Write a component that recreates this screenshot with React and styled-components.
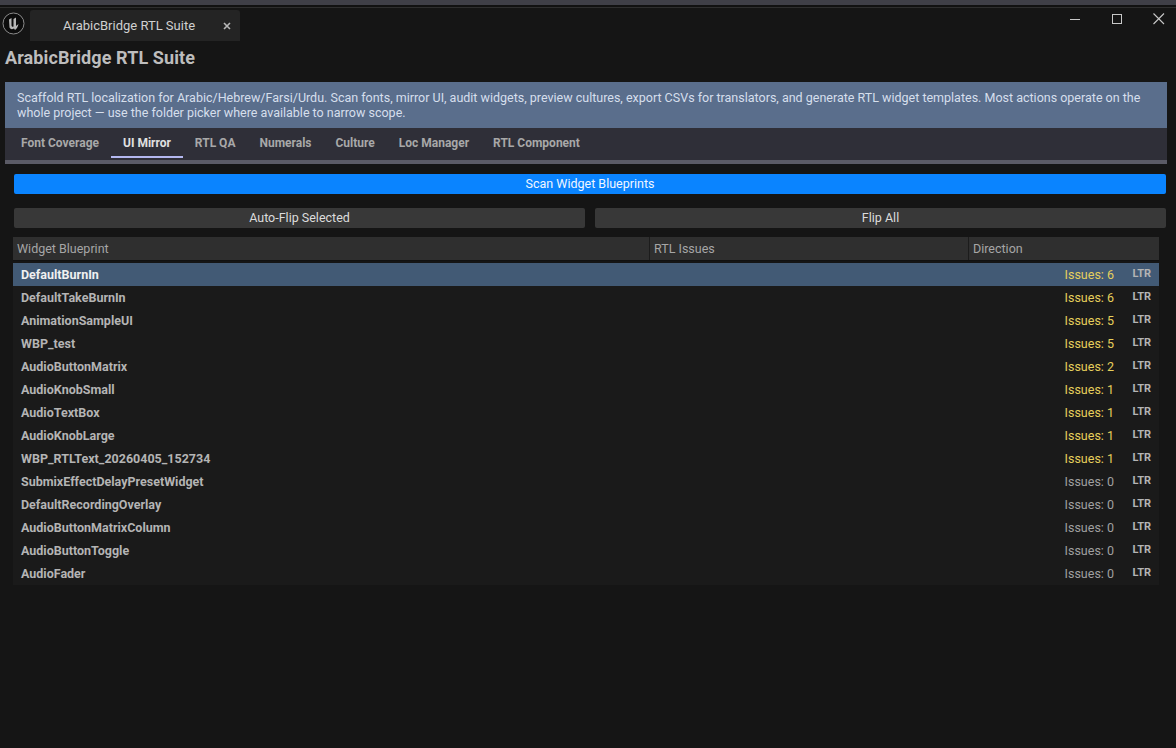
import React from "react";
import styled, { createGlobalStyle } from "styled-components";

const GlobalStyle = createGlobalStyle`
  html, body {
    margin: 0;
    padding: 0;
    background: #151515;
  }
  * {
    box-sizing: border-box;
  }
`;

const Window = styled.div`
  width: 1176px;
  height: 748px;
  overflow: hidden;
  background: #151515;
  font-family: Roboto, "Liberation Sans", sans-serif;
  color: #c0c0c0;
`;

const TopStrip = styled.div`
  height: 8px;
  background: #111111;
  border-top: 5px solid #3f3f47;
  border-bottom: 1px solid #2e2e2e;
`;

const TitleBar = styled.div`
  display: flex;
  align-items: flex-start;
  height: 33px;
  padding: 2px 0 0 2px;
`;

const Logo = styled.svg`
  width: 23px;
  height: 23px;
  margin-top: 2px;
  flex: none;
`;

const DocTab = styled.div`
  display: flex;
  align-items: center;
  justify-content: space-between;
  width: 210px;
  height: 31px;
  margin-left: 5px;
  padding: 0 9px 0 33px;
  background: #242424;
  border-radius: 3px 3px 0 0;
  font-size: 13px;
  color: #d0d0d0;
`;

const TabClose = styled.svg`
  width: 8px;
  height: 8px;
`;

const WindowButtons = styled.div`
  display: flex;
  margin-left: auto;
  padding-right: 10px;
`;

const WindowButton = styled.svg`
  width: 14px;
  height: 14px;
  margin-left: 28px;
  margin-top: 2px;
`;

const Heading = styled.h1`
  margin: 0;
  height: 41px;
  padding: 4px 0 0 5px;
  font-size: 18px;
  line-height: 26px;
  font-weight: 700;
  letter-spacing: 0.1px;
  color: #bdbdbd;
`;

const Panel = styled.div`
  margin: 0 9px 0 5px;
`;

const Banner = styled.div`
  height: 46px;
  padding: 8px 12px;
  background: #5a6e8c;
  color: #d6dfec;
  font-size: 12.5px;
  line-height: 15px;
`;

const TabBar = styled.div`
  display: flex;
  height: 36px;
  padding-left: 4px;
  background: #2f2f38;
  border-bottom: 4px solid #5b5b66;
`;

const Tab = styled.div`
  height: 30px;
  padding: 0 12px;
  font-size: 12px;
  font-weight: 700;
  line-height: 30px;
  color: ${(p) => (p.$active ? "#e0e0e0" : "#a8a8a8")};
  border-bottom: 2px solid ${(p) => (p.$active ? "#b4b8f0" : "transparent")};
`;

const Content = styled.div`
  padding: 10px 9px 0 8px;
  margin: 0 -9px 0 -5px;
  padding-left: 13px;
`;

const Button = styled.div`
  flex: 1;
  height: 20px;
  margin-left: 1px;
  border-radius: 2px;
  font-size: 12.5px;
  line-height: 20px;
  text-align: center;
  color: ${(p) => (p.$primary ? "#f0f6ff" : "#dcdcdc")};
  background: ${(p) => (p.$primary ? "#0a84ff" : "#383838")};
`;

const ButtonRow = styled.div`
  display: flex;
  gap: 9px;
  margin: ${(p) => p.$margin || 0};
  padding-right: 1px;
`;

const Table = styled.div`
  margin: 9px 0 0;
  width: 1146px;
`;

const HeaderRow = styled.div`
  display: grid;
  grid-template-columns: 637px 319px 1fr;
  height: 24px;
  background: #2f2f2f;
  border-bottom: 1px solid #111111;
  margin-bottom: 2px;
`;

const HeaderCell = styled.div`
  padding-left: 4px;
  font-size: 12.5px;
  line-height: 23px;
  color: #a6a6a6;
  border-right: ${(p) => (p.$last ? "none" : "1px solid #1c1c1c")};
`;

const Row = styled.div`
  display: flex;
  align-items: center;
  height: 23px;
  padding: 0 8px;
  background: ${(p) => (p.$selected ? "#425a75" : "#1a1a1a")};
`;

const Name = styled.div`
  flex: 1;
  font-size: 12.5px;
  font-weight: 700;
  color: ${(p) => (p.$selected ? "#f0f0f0" : "#b4b4b4")};
`;

const Issues = styled.div`
  font-size: 12.5px;
  color: ${(p) => (p.$warn ? "#e6cf5c" : "#a0a0a0")};
`;

const Dir = styled.div`
  width: 37px;
  margin-bottom: 2px;
  text-align: right;
  font-size: 11px;
  font-weight: 700;
  color: #b4b4b4;
`;

const tabs = [
  "Font Coverage",
  "UI Mirror",
  "RTL QA",
  "Numerals",
  "Culture",
  "Loc Manager",
  "RTL Component",
];

const rows = [
  ["DefaultBurnIn", 6],
  ["DefaultTakeBurnIn", 6],
  ["AnimationSampleUI", 5],
  ["WBP_test", 5],
  ["AudioButtonMatrix", 2],
  ["AudioKnobSmall", 1],
  ["AudioTextBox", 1],
  ["AudioKnobLarge", 1],
  ["WBP_RTLText_20260405_152734", 1],
  ["SubmixEffectDelayPresetWidget", 0],
  ["DefaultRecordingOverlay", 0],
  ["AudioButtonMatrixColumn", 0],
  ["AudioButtonToggle", 0],
  ["AudioFader", 0],
];

export default function App() {
  return (
    <Window>
      <GlobalStyle />
      <TopStrip />
      <TitleBar>
        <Logo viewBox="0 0 23 23" fill="none">
          <circle cx="11.5" cy="11.5" r="10.5" fill="#0c0c0c" stroke="#8a8a8a" strokeWidth="1" />
          <path
            d="M7 7.5 L9.5 6 L9.5 13.5 Q10 15.5 11.5 14.5 L11.5 7 L14 5.5 L14 14 L16.5 12 Q15.5 16.5 13 18 L12 16.5 Q9 18.5 7.5 15.5 Z"
            fill="#b8b8b8"
          />
        </Logo>
        <DocTab>
          ArabicBridge RTL Suite
          <TabClose viewBox="0 0 8 8">
            <path d="M1 1 L7 7 M7 1 L1 7" stroke="#b8b8b8" strokeWidth="1.6" />
          </TabClose>
        </DocTab>
        <WindowButtons>
          <WindowButton viewBox="0 0 14 14">
            <path d="M2 7.5 H12" stroke="#c8c8c8" strokeWidth="1" />
          </WindowButton>
          <WindowButton viewBox="0 0 14 14">
            <rect x="2.5" y="2.5" width="9" height="9" fill="none" stroke="#c8c8c8" strokeWidth="1" />
          </WindowButton>
          <WindowButton viewBox="0 0 14 14">
            <path d="M1.5 1.5 L12 12 M12 1.5 L1.5 12" stroke="#c8c8c8" strokeWidth="1.1" />
          </WindowButton>
        </WindowButtons>
      </TitleBar>
      <Heading>ArabicBridge RTL Suite</Heading>
      <Panel>
        <Banner>
          Scaffold RTL localization for Arabic/Hebrew/Farsi/Urdu. Scan fonts, mirror UI, audit widgets, preview cultures, export CSVs for translators, and generate RTL widget templates. Most actions operate on the whole project — use the folder picker where available to narrow scope.
        </Banner>
        <TabBar>
          {tabs.map((t) => (
            <Tab key={t} $active={t === "UI Mirror"}>
              {t}
            </Tab>
          ))}
        </TabBar>
        <Content>
          <ButtonRow>
            <Button $primary>Scan Widget Blueprints</Button>
          </ButtonRow>
          <ButtonRow $margin="14px 0 0">
            <Button>Auto-Flip Selected</Button>
            <Button>Flip All</Button>
          </ButtonRow>
          <Table>
            <HeaderRow>
              <HeaderCell>Widget Blueprint</HeaderCell>
              <HeaderCell>RTL Issues</HeaderCell>
              <HeaderCell $last>Direction</HeaderCell>
            </HeaderRow>
            {rows.map(([name, count], i) => (
              <Row key={name} $selected={i === 0}>
                <Name $selected={i === 0}>{name}</Name>
                <Issues $warn={count > 0}>Issues: {count}</Issues>
                <Dir>LTR</Dir>
              </Row>
            ))}
          </Table>
        </Content>
      </Panel>
    </Window>
  );
}
